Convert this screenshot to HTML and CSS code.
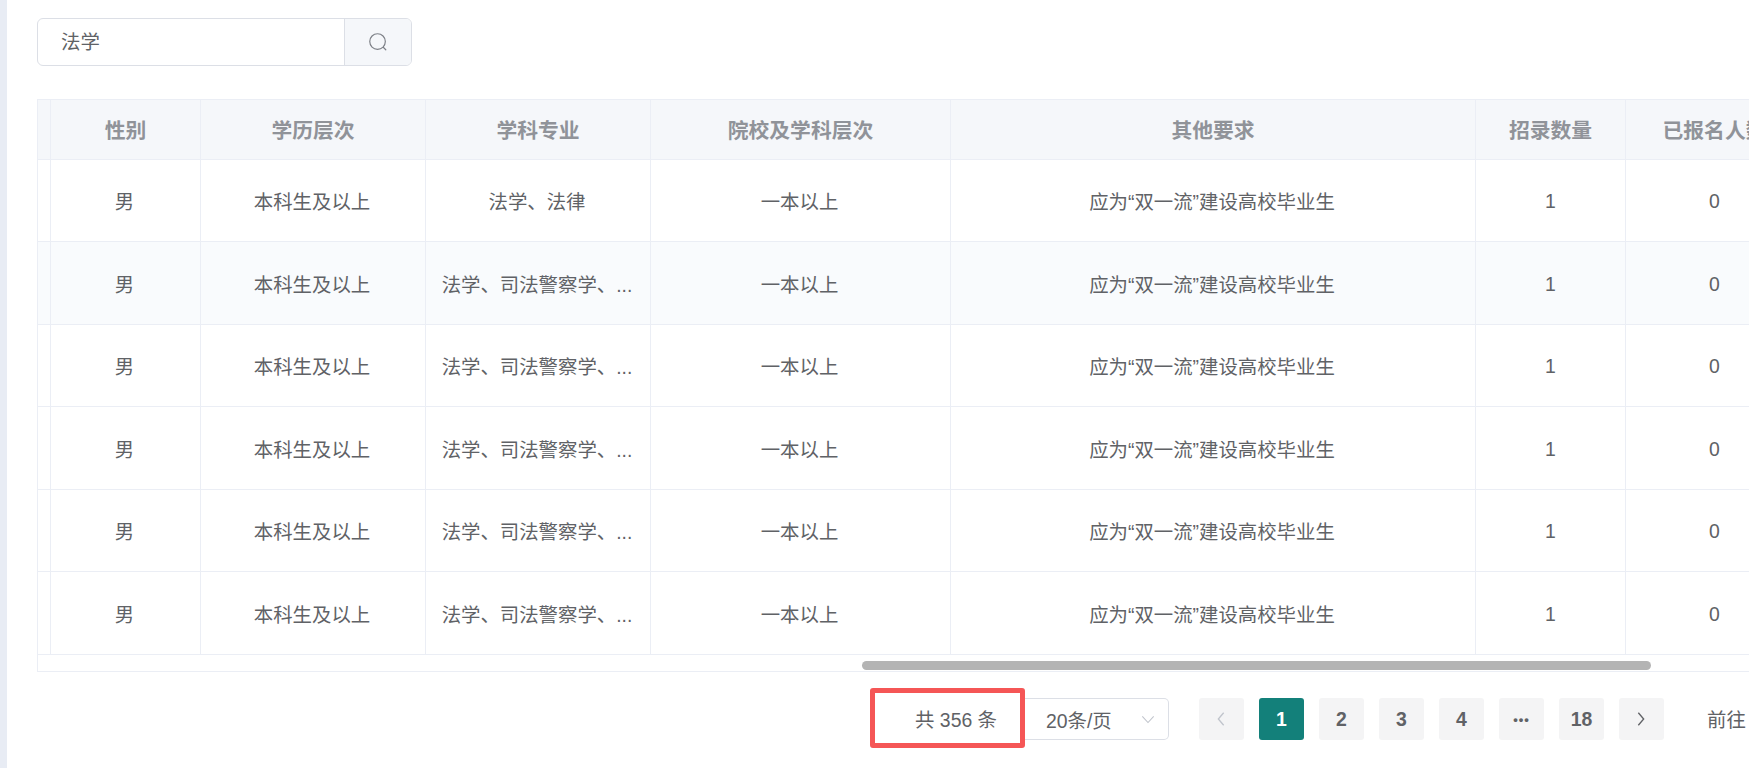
FILE: index.html
```html
<!DOCTYPE html>
<html lang="zh-CN">
<head>
<meta charset="utf-8">
<title>职位查询</title>
<link rel="stylesheet" href="styles.css">
</head>
<body>
<div class="page">
  <aside class="rail"></aside>
  <main class="main">
    <div class="search">
      <div class="search-input">法学</div>
      <button class="search-btn" type="button" aria-label="搜索">
        <svg viewBox="0 0 24 24" width="22" height="22" fill="none" stroke="#7d8087" stroke-width="1.3" stroke-linecap="round"><circle cx="11.5" cy="11.5" r="8.5"/><path d="M18 18l2.500 2.500"/></svg>
      </button>
    </div>
    <div class="table-wrap">
      <table class="grid">
        <colgroup>
          <col class="c0"><col class="c1"><col class="c2"><col class="c3"><col class="c4"><col class="c5"><col class="c6"><col class="c7">
        </colgroup>
        <thead>
          <tr><th></th><th>性别</th><th>学历层次</th><th>学科专业</th><th>院校及学科层次</th><th>其他要求</th><th>招录数量</th><th>已报名人数</th></tr>
        </thead>
        <tbody>
          <tr class="r-a"><td></td><td>男</td><td>本科生及以上</td><td>法学、法律</td><td>一本以上</td><td>应为“双一流”建设高校毕业生</td><td class="num">1</td><td class="num">0</td></tr>
          <tr class="r-b hover"><td></td><td>男</td><td>本科生及以上</td><td><div class="clip">法学、司法警察学、...</div></td><td>一本以上</td><td>应为“双一流”建设高校毕业生</td><td class="num">1</td><td class="num">0</td></tr>
          <tr class="r-a"><td></td><td>男</td><td>本科生及以上</td><td><div class="clip">法学、司法警察学、...</div></td><td>一本以上</td><td>应为“双一流”建设高校毕业生</td><td class="num">1</td><td class="num">0</td></tr>
          <tr class="r-b"><td></td><td>男</td><td>本科生及以上</td><td><div class="clip">法学、司法警察学、...</div></td><td>一本以上</td><td>应为“双一流”建设高校毕业生</td><td class="num">1</td><td class="num">0</td></tr>
          <tr class="r-a"><td></td><td>男</td><td>本科生及以上</td><td><div class="clip">法学、司法警察学、...</div></td><td>一本以上</td><td>应为“双一流”建设高校毕业生</td><td class="num">1</td><td class="num">0</td></tr>
          <tr class="r-b"><td></td><td>男</td><td>本科生及以上</td><td><div class="clip">法学、司法警察学、...</div></td><td>一本以上</td><td>应为“双一流”建设高校毕业生</td><td class="num">1</td><td class="num">0</td></tr>
        </tbody>
      </table>
      <div class="scrollbar"></div>
    </div>
    <div class="pager">
      <div class="total">共 356 条</div>
      <div class="size">
        <span>20条/页</span>
        <svg viewBox="0 0 16 10" width="14" height="9" fill="none" stroke="#c0c4cc" stroke-width="1.2"><path d="M1.500 1.500L8 8.500l6.500-7"/></svg>
      </div>
      <div class="pages">
        <button class="pg off" type="button" aria-label="上一页"><svg viewBox="0 0 10 18" width="10" height="16" fill="none" stroke="#c0c4cc" stroke-width="1.5"><path d="M8 2L2 9l6 7"/></svg></button>
        <button class="pg on" type="button">1</button>
        <button class="pg" type="button">2</button>
        <button class="pg" type="button">3</button>
        <button class="pg" type="button">4</button>
        <button class="pg more" type="button">•••</button>
        <button class="pg" type="button">18</button>
        <button class="pg" type="button" aria-label="下一页"><svg viewBox="0 0 10 18" width="10" height="16" fill="none" stroke="#606266" stroke-width="1.5"><path d="M2 2l6 7-6 7"/></svg></button>
      </div>
      <div class="goto">前往</div>
    </div>
  </main>
</div>
</body>
</html>
```
FILE: styles.css
```css
* { box-sizing: border-box; }
html, body { margin: 0; height: 100%; background: #fff; overflow: hidden; }
body {
  font-family: "Liberation Sans", "Noto Sans CJK SC", sans-serif;
  font-size: 19.4px;
  color: #606266;
}
.page { display: flex; width: 1749px; height: 768px; overflow: hidden; }
.rail { flex: 0 0 7px; background: #e8ecf4; }
.main { flex: 1; min-width: 0; padding: 18px 0 0 30px; }

.search { display: flex; width: 375px; height: 48px; border: 1px solid #dcdfe6; border-radius: 6px; overflow: hidden; }
.search-input { flex: 1; padding-left: 23px; line-height: 46px; }
.search-btn { flex: 0 0 67px; padding: 0; background: #f5f7fa; border: 0; border-left: 1px solid #dcdfe6; display: flex; align-items: center; justify-content: center; }

.table-wrap { position: relative; margin-top: 33px; height: 573px; border: 1px solid #ebeef5; border-right: 0; overflow: hidden; }
.grid { table-layout: fixed; width: 1766px; border-collapse: separate; border-spacing: 0; }
.c0 { width: 13px; }
.c1 { width: 150px; }
.c2 { width: 225px; }
.c3 { width: 225px; }
.c4 { width: 300px; }
.c5 { width: 525px; }
.c6 { width: 150px; }
.c7 { width: 178px; }
.grid th, .grid td { border-right: 1px solid #ebeef5; border-bottom: 1px solid #ebeef5; text-align: center; padding: 0; }
.grid td { padding-right: 2px; }
.grid td.num { padding: 2px 0 0; }
.grid th { height: 60px; padding-bottom: 2px; background: #f5f7fa; color: #909399; font-weight: 700; font-size: 20.8px; }
.r-a td { height: 82px; }
.r-b td { height: 83px; }
.hover td { background: #f9fbfd; }
.clip { padding: 0 14px; white-space: nowrap; overflow: hidden; text-overflow: ellipsis; }

.scrollbar { position: absolute; left: 824px; bottom: 1px; width: 789px; height: 9px; border-radius: 5px; background: #b4b4b4; }

.pager { display: flex; align-items: center; margin-top: 16px; padding-left: 833px; height: 60px; }
.total { flex: 0 0 155px; height: 60px; border: 5px solid #f55656; border-radius: 3px; display: flex; align-items: center; justify-content: flex-end; padding-right: 23px; white-space: nowrap; }
.size { flex: 0 0 144px; height: 42px; margin-top: 2px; border: 1px solid #dcdfe6; border-left: 0; border-radius: 0 5px 5px 0; display: flex; align-items: center; justify-content: space-between; padding: 0 13px 0 21px; }
.pages { display: flex; gap: 15px; margin-left: 30px; margin-top: 2px; }
.pg { width: 45px; height: 42px; padding: 0; border: 0; border-radius: 3px; background: #f4f4f5; color: #606266; font: 700 19.4px "Liberation Sans", "Noto Sans CJK SC", sans-serif; display: flex; align-items: center; justify-content: center; }
.pg svg { margin-right: 2px; }
.pg.on { background: #13807a; color: #fff; }
.pg.more { font-size: 13px; letter-spacing: 1px; }
.goto { margin-left: 43px; white-space: nowrap; }
```
